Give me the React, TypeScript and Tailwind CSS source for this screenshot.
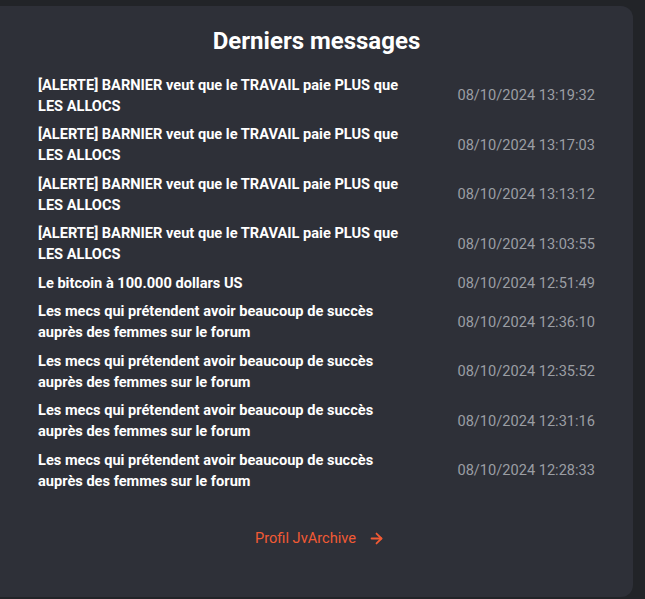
import { ArrowRight } from 'lucide-react';

const messages = [
  { title: '[ALERTE] BARNIER veut que le TRAVAIL paie PLUS que LES ALLOCS', date: '08/10/2024 13:19:32' },
  { title: '[ALERTE] BARNIER veut que le TRAVAIL paie PLUS que LES ALLOCS', date: '08/10/2024 13:17:03' },
  { title: '[ALERTE] BARNIER veut que le TRAVAIL paie PLUS que LES ALLOCS', date: '08/10/2024 13:13:12' },
  { title: '[ALERTE] BARNIER veut que le TRAVAIL paie PLUS que LES ALLOCS', date: '08/10/2024 13:03:55' },
  { title: 'Le bitcoin à 100.000 dollars US', date: '08/10/2024 12:51:49' },
  { title: 'Les mecs qui prétendent avoir beaucoup de succès auprès des femmes sur le forum', date: '08/10/2024 12:36:10' },
  { title: 'Les mecs qui prétendent avoir beaucoup de succès auprès des femmes sur le forum', date: '08/10/2024 12:35:52' },
  { title: 'Les mecs qui prétendent avoir beaucoup de succès auprès des femmes sur le forum', date: '08/10/2024 12:31:16' },
  { title: 'Les mecs qui prétendent avoir beaucoup de succès auprès des femmes sur le forum', date: '08/10/2024 12:28:33' },
];

export default function App() {
  return (
    <div className="h-[599px] w-[645px] bg-[#222428] pt-[6px] font-['Roboto',sans-serif]">
      <div className="flex h-[591px] w-[633px] flex-col rounded-r-xl bg-[#2e3038] px-[38px] pt-[19px]">
        <h2 className="text-center text-[24px] font-bold leading-[32px] text-white">
          Derniers messages
        </h2>
        <ul className="mt-[17.5px] flex flex-col gap-[7.5px]">
          {messages.map((m, i) => (
            <li key={i} className="flex items-center justify-between">
              <a className="w-[372px] text-[14.6px] font-bold leading-[21px] text-white">
                {m.title}
              </a>
              <span className="text-[14.6px] leading-[21px] text-[#9b9ea4]">{m.date}</span>
            </li>
          ))}
        </ul>
        <div className="mt-[36px] flex justify-center pl-[7px]">
          <a className="flex items-center gap-3 text-[14.6px] leading-[21px] text-[#f25a34]">
            Profil JvArchive
            <ArrowRight className="h-[17px] w-[17px]" strokeWidth={2.5} />
          </a>
        </div>
      </div>
    </div>
  );
}
